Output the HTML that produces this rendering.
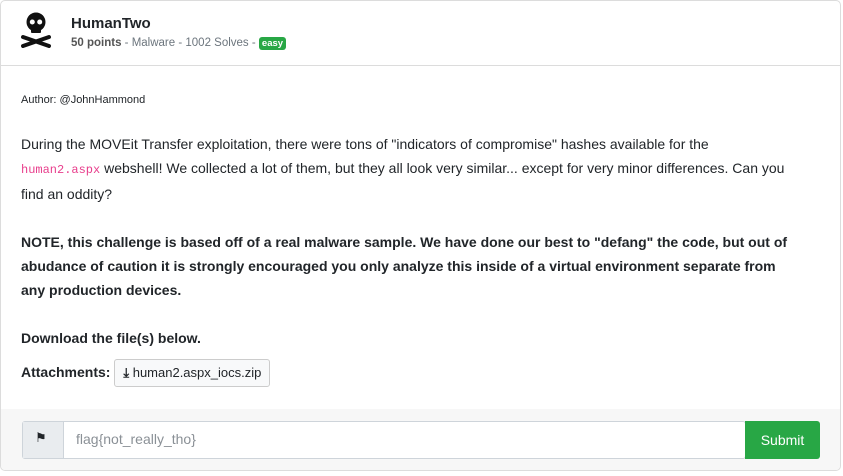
<!DOCTYPE html>
<html><head><style>
body{margin:0;background:#fff;font-family:"Liberation Sans",sans-serif;color:#212529;}
.card{position:absolute;left:0;top:0;width:839px;height:469px;border:1px solid #dcdcdc;border-radius:5px;overflow:hidden;background:#fff;}
.hdr{height:64px;border-bottom:1px solid #dcdcdc;position:relative;}
.title{position:absolute;left:70px;top:14px;font-size:15px;font-weight:bold;}
.meta{position:absolute;left:70px;top:36px;font-size:11.5px;color:#6c757d;}
.meta b{color:#555;}
.badge{background:#28a745;color:#fff;font-size:9.5px;font-weight:bold;border-radius:3px;padding:1px 3px;}
.body{position:absolute;left:20px;top:87px;width:768px;font-size:14px;line-height:24px;}
.auth{font-size:11px;}
code{color:#e83e8c;font-family:"Liberation Mono",monospace;font-size:12px;}
.btn{display:inline-block;border:1px solid #ccc;border-radius:3px;background:#f8f9fa;padding:0 8px;line-height:26px;font-size:13px;font-weight:normal;}
.foot{position:absolute;left:0;top:408px;width:839px;height:61px;background:#f7f7f7;}
.inp{position:absolute;left:21px;top:12px;width:722px;height:36px;border:1px solid #ced4da;border-radius:3px;background:#fff;}
.ico{position:absolute;left:0;top:0;width:40px;height:36px;background:#e9ecef;border-right:1px solid #ced4da;}
.ph{position:absolute;left:53px;top:9px;color:#8a9096;font-size:14px;}
.sub{position:absolute;left:744px;top:12px;width:75px;height:38px;background:#28a745;border-radius:0 3px 3px 0;color:#fff;font-size:14px;text-align:center;line-height:38px;}
</style></head><body>
<div class="card">
<div class="hdr">
<svg style="position:absolute;left:19px;top:11px" width="32" height="36" viewBox="0 0 32 36">
<circle cx="16" cy="10" r="9.5" fill="#111"/><rect x="11" y="14" width="10" height="7" rx="1" fill="#111"/>
<circle cx="12.3" cy="10" r="2.5" fill="#fff"/><circle cx="19.7" cy="10" r="2.5" fill="#fff"/>
<path d="M3 25 L29 34 M29 25 L3 34" stroke="#111" stroke-width="4" stroke-linecap="round"/></svg>
<div class="title">HumanTwo</div>
<div class="meta"><b>50 points</b> - Malware - 1002 Solves - <span class="badge">easy</span></div>
</div>
<div class="body">
<div class="auth">Author: @JohnHammond</div>
<div style="margin-top:20px">During the MOVEit Transfer exploitation, there were tons of "indicators of compromise" hashes available for the <code>human2.aspx</code> webshell! We collected a lot of them, but they all look very similar... except for very minor differences. Can you find an oddity?</div>
<div style="margin-top:24px;font-weight:bold">NOTE, this challenge is based off of a real malware sample. We have done our best to "defang" the code, but out of abudance of caution it is strongly encouraged you only analyze this inside of a virtual environment separate from any production devices.</div>
<div style="margin-top:24px;font-weight:bold">Download the file(s) below.</div>
<div style="margin-top:9px;font-weight:bold">Attachments: <span class="btn"><b>⤓</b> human2.aspx_iocs.zip</span></div>
</div>
<div class="foot">
<div class="inp"><div class="ico"><span style="position:absolute;left:12px;top:8px;font-size:13px">⚑</span></div><div class="ph">flag{not_really_tho}</div></div>
<div class="sub">Submit</div>
</div>
</div>
</body></html>
